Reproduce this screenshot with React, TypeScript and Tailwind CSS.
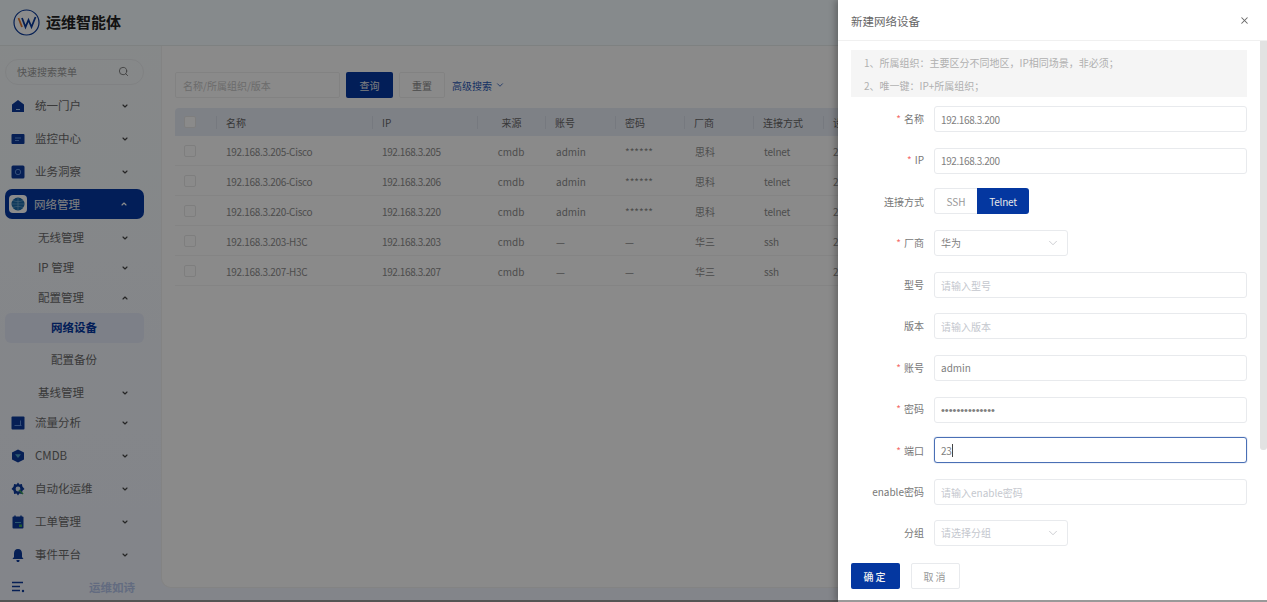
import { ChevronDown, ChevronUp, Search, X } from 'lucide-react';
import type { ReactNode } from 'react';

const FONT = '"Noto Sans CJK SC", "Noto Sans", sans-serif';

const COLS = 'grid-cols-[41px_156px_105px_68px_70px_69px_69px_70px_1fr]';

const devices = [
  { name: '192.168.3.205-Cisco', ip: '192.168.3.205', user: 'admin', pwd: '******', vendor: '思科', conn: 'telnet' },
  { name: '192.168.3.206-Cisco', ip: '192.168.3.206', user: 'admin', pwd: '******', vendor: '思科', conn: 'telnet' },
  { name: '192.168.3.220-Cisco', ip: '192.168.3.220', user: 'admin', pwd: '******', vendor: '思科', conn: 'telnet' },
  { name: '192.168.3.203-H3C', ip: '192.168.3.203', user: '—', pwd: '—', vendor: '华三', conn: 'ssh' },
  { name: '192.168.3.207-H3C', ip: '192.168.3.207', user: '—', pwd: '—', vendor: '华三', conn: 'ssh' },
];

function Glyph({ children }: { children: ReactNode }) {
  return (
    <svg width="14" height="14" viewBox="0 0 14 14" className="shrink-0">
      {children}
    </svg>
  );
}

const icons: Record<string, ReactNode> = {
  home: (
    <Glyph>
      <path d="M7 1 13 5.500V13H1V5.500Z" fill="#0b3a9c" />
      <path d="M5 10.500h4" stroke="#9fc3ee" strokeWidth="1" />
    </Glyph>
  ),
  monitor: (
    <Glyph>
      <rect x="0.500" y="2" width="13" height="10" rx="1" fill="#0b3a9c" />
      <path d="M4 6h6M4 8.500h4" stroke="#5f8fdc" strokeWidth="1" />
    </Glyph>
  ),
  insight: (
    <Glyph>
      <rect x="0.500" y="0.500" width="13" height="13" rx="1.500" fill="#0b3a9c" />
      <circle cx="7" cy="7" r="2.700" fill="none" stroke="#5f8fdc" strokeWidth="1" />
    </Glyph>
  ),
  flow: (
    <Glyph>
      <rect x="0.500" y="0.500" width="13" height="13" rx="1" fill="#0b3a9c" />
      <path d="M3.500 9.500h7M9.500 4.500v5" stroke="#5f8fdc" strokeWidth="1" />
    </Glyph>
  ),
  cmdb: (
    <Glyph>
      <path d="M7 .5 13 3.500v7L7 13.500 1 10.500v-7Z" fill="#0b3a9c" />
      <path d="M4 5.200h6L7 9Z" fill="#4fa0c8" />
    </Glyph>
  ),
  auto: (
    <Glyph>
      <path d="M7 .5 8.400 2.600 10.900 2l.5 2.500L13.500 7l-2.100 1.800-.5 3.200-2.500-.6L7 13.500 5.600 11.400 3.100 12l-.5-3.200L.5 7l2.100-2.500.5-2.500 2.500.6Z" fill="#0b3a9c" />
      <circle cx="7" cy="7" r="2.400" fill="#dfe8f2" />
      <path d="M8 8 12 12" stroke="#3fa35a" strokeWidth="1.600" />
    </Glyph>
  ),
  order: (
    <Glyph>
      <rect x="1.500" y="1.500" width="11" height="12" rx="1" fill="#0b3a9c" />
      <path d="M4 .5v2.500M10 .5v2.500" stroke="#0b3a9c" strokeWidth="1.400" />
      <path d="M4 7.500h6" stroke="#4fa0c8" strokeWidth="1" />
      <rect x="8" y="9.500" width="3" height="2.500" fill="#3fa35a" />
    </Glyph>
  ),
  bell: (
    <Glyph>
      <path d="M7 1c2.700 0 4 2 4 4.500V9l1.500 2h-11L3 9V5.500C3 3 4.300 1 7 1Z" fill="#0b3a9c" />
      <path d="M5.500 12h3v.6a1.500 1.500 0 0 1-3 0Z" fill="#0b3a9c" />
    </Glyph>
  ),
};

function NavItem({ icon, label }: { icon: string; label: string }) {
  return (
    <div className="flex h-[33px] items-center pl-[11px] pr-[21px]">
      <span className="flex w-[18px] justify-start">{icons[icon]}</span>
      <span className="ml-[6px] flex-1 text-[11.5px] text-[#6a6a6a]">{label}</span>
      <ChevronDown size={8} strokeWidth={3.500} className="text-[#444]" />
    </div>
  );
}

function SubItem({ label, open, h }: { label: string; open?: boolean; h: string }) {
  return (
    <div className={`flex items-center pl-[38px] pr-[21px] ${h}`}>
      <span className="flex-1 text-[11.5px] text-[#6a6a6a]">{label}</span>
      {open ? (
        <ChevronUp size={8} strokeWidth={3.500} className="text-[#444]" />
      ) : (
        <ChevronDown size={8} strokeWidth={3.500} className="text-[#444]" />
      )}
    </div>
  );
}

function Sidebar() {
  return (
    <aside className="flex w-[150px] shrink-0 flex-col pt-[13px]">
      <div className="ml-[5px] mr-[6px] flex h-[26px] items-center rounded-full border border-[#eaecee] pl-[11px] pr-[14px]">
        <span className="flex-1 text-[10px] text-[#999]">快速搜索菜单</span>
        <Search size={11} className="text-[#777]" />
      </div>
      <div className="mt-[5px]">
        <NavItem icon="home" label="统一门户" />
        <NavItem icon="monitor" label="监控中心" />
        <NavItem icon="insight" label="业务洞察" />
        <div className="ml-[5px] mr-[6px] flex h-[30px] items-center rounded-[7px] bg-[#0437a0] pl-[4px] pr-[16px]">
          <span className="flex h-[18px] w-[18px] items-center justify-center rounded-[4px] bg-white">
            <svg width="14" height="14" viewBox="0 0 14 14">
              <circle cx="7" cy="7" r="6.500" fill="#1c6aa8" />
              <path d="M7 .5v13M.5 7h13M2 3.500c3 1.500 7 1.500 10 0M2 10.500c3-1.500 7-1.500 10 0" stroke="#7fb2d6" strokeWidth=".6" fill="none" />
            </svg>
          </span>
          <span className="ml-[7px] flex-1 pt-[2px] text-[11.5px] text-[#e8e8e8]">网络管理</span>
          <ChevronUp size={8} strokeWidth={3.500} className="text-white" />
        </div>
        <SubItem label="无线管理" h="mt-[3px] h-[33px]" />
        <SubItem label="IP 管理" h="h-[30px] -mt-[2px]" />
        <SubItem label="配置管理" open h="h-[30px]" />
        <div className="ml-[5px] mr-[6px] flex h-[30px] items-center rounded-[6px] bg-[#e4e9f7] pl-[46px] text-[11.5px] font-bold text-[#0437a0]">
          网络设备
        </div>
        <div className="mt-[1px] flex h-[33px] items-center pl-[51px] text-[11.5px] text-[#6a6a6a]">配置备份</div>
        <SubItem label="基线管理" h="h-[33px]" />
        <div className="-mt-[3px]">
          <NavItem icon="flow" label="流量分析" />
          <NavItem icon="cmdb" label="CMDB" />
          <NavItem icon="auto" label="自动化运维" />
          <NavItem icon="order" label="工单管理" />
          <NavItem icon="bell" label="事件平台" />
        </div>
      </div>
      <div className="mt-[3px] flex h-[26px] items-center pl-[12px]">
        <svg width="13" height="12" viewBox="0 0 13 12">
          <path d="M0 1.500h11M0 5.500h8M0 9.500h8" stroke="#0b3a9c" strokeWidth="1.300" />
          <circle cx="11" cy="10" r="1.200" fill="#0b3a9c" />
        </svg>
        <span className="ml-[64px] text-[11.5px] font-bold text-[#b4c4ea]">运维如诗</span>
      </div>
    </aside>
  );
}

function Checkbox() {
  return <span className="block h-[12px] w-[12px] rounded-[2px] border border-[#e6e6e6] bg-[#fcfcfc]" />;
}

function DeviceTable() {
  return (
    <div className="min-w-0 flex-1 rounded-bl-[10px] border-b border-l border-[#eeeeee] bg-[#fcfcfc] pl-[13px] pt-[26px]">
      <div className="flex items-center">
        <div className="flex h-[26px] w-[165px] items-center rounded-[2px] border border-[#ededed] pl-[7px] text-[10px] text-[#c4c4c4]">
          名称/所属组织/版本
        </div>
        <button className="ml-[6px] h-[26px] w-[47px] rounded-[2px] bg-[#0437a0] text-[10px] text-[#e8e8e8]">查询</button>
        <button className="ml-[6px] h-[26px] w-[46px] rounded-[2px] border border-[#ededed] text-[10px] text-[#8a8a8a]">重置</button>
        <span className="ml-[7px] flex items-center gap-[3px] text-[10px] text-[#2a58b4]">
          高级搜索
          <ChevronDown size={10} />
        </span>
      </div>
      <div className={`mt-[10px] grid h-[28px] items-center rounded-t-[4px] bg-[#e6ebf5] text-[10px] text-[#666] ${COLS}`}>
        <span className="pl-[9px]"><Checkbox /></span>
        {['名称', 'IP', '来源', '账号', '密码', '厂商', '连接方式', '设备'].map((h, i) => (
          <span
            key={h}
            className={`h-[13px] overflow-hidden whitespace-nowrap border-l border-[#d8dde8] leading-[13px] ${i === 2 ? 'text-center' : 'pl-[9px]'}`}
          >
            {i === 7 ? '设' : h}
          </span>
        ))}
      </div>
      {devices.map((d) => (
        <div key={d.name} className={`grid h-[30px] items-center border-b border-[#f1f1f1] pt-[1px] text-[10px] text-[#8c8c8c] ${COLS}`}>
          <span className="pl-[9px]"><Checkbox /></span>
          <span className="pl-[10px] tracking-[-0.3px]">{d.name}</span>
          <span className="pl-[10px] tracking-[-0.4px]">{d.ip}</span>
          <span className="text-center">cmdb</span>
          <span className="pl-[11px]">{d.user}</span>
          <span className="pl-[10px]">{d.pwd}</span>
          <span className="pl-[11px]">{d.vendor}</span>
          <span className="pl-[11px] tracking-[-0.2px]">{d.conn}</span>
          <span className="pl-[10px]">2</span>
        </div>
      ))}
    </div>
  );
}

function Field({ label, required, children }: { label: string; required?: boolean; children: ReactNode }) {
  return (
    <div className="mb-[15.45px] flex h-[26px] items-center">
      <label className="w-[73px] whitespace-nowrap text-right text-[10px] text-[#777]">
        {required && <span className="mr-[3px] text-[#f56c6c]">*</span>}
        {label}
      </label>
      <div className="ml-[10px] min-w-0 flex-1">{children}</div>
    </div>
  );
}

const inputClass =
  'h-[26px] w-full rounded-[3px] border border-[#e8eaed] bg-white px-[6px] text-[10px] text-[#808080] outline-none placeholder:text-[#c4c7ce]';

function SelectBox({ text, muted }: { text: string; muted?: boolean }) {
  return (
    <div className="flex h-[26px] w-[134px] items-center rounded-[3px] border border-[#e8eaed] pl-[6px] pr-[7px] text-[10px]">
      <span className={`flex-1 ${muted ? 'text-[#c4c7ce]' : 'text-[#808080]'}`}>{text}</span>
      <ChevronDown size={14} strokeWidth={1} className="text-[#a8abb2]" />
    </div>
  );
}

function Drawer() {
  return (
    <div className="absolute inset-y-0 right-0 flex w-[429px] flex-col border-b-2 border-[#999] bg-white shadow-[-3px_0_6px_rgba(0,0,0,0.25)]">
      <div className="flex h-[41px] shrink-0 items-center justify-between border-b border-[#f0f0f0] pl-[13px] pr-[17px] pt-[3px]">
        <span className="text-[11.5px] text-[#666]">新建网络设备</span>
        <X size={11} strokeWidth={2.200} className="-mt-[3px] text-[#666]" />
      </div>
      <div className="relative min-h-0 flex-1 overflow-hidden pl-[13px] pr-[20px] pt-[9px]">
        <div className="h-[47px] bg-[#f5f5f5] pl-[13px] pt-[1px] text-[10px] leading-[23px] text-[#b0b0b0]">
          <div>1、所属组织：主要区分不同地区，IP相同场景，非必须；</div>
          <div>2、唯一键：IP+所属组织；</div>
        </div>
        <div className="mt-[8.5px]">
          <Field label="名称" required>
            <input className={`${inputClass} tracking-[-0.4px]`} defaultValue="192.168.3.200" />
          </Field>
          <Field label="IP" required>
            <input className={`${inputClass} tracking-[-0.4px]`} defaultValue="192.168.3.200" />
          </Field>
          <Field label="连接方式">
            <div className="flex h-[26px] text-[10px]">
              <span className="flex w-[43px] items-center justify-center rounded-l-[3px] border border-r-0 border-[#e8eaed] text-[#999]">SSH</span>
              <span className="flex w-[52px] items-center justify-center rounded-r-[3px] bg-[#0437a0] tracking-[-0.2px] text-[#e8e8e8]">Telnet</span>
            </div>
          </Field>
          <Field label="厂商" required>
            <SelectBox text="华为" />
          </Field>
          <Field label="型号">
            <input className={inputClass} placeholder="请输入型号" />
          </Field>
          <Field label="版本">
            <input className={inputClass} placeholder="请输入版本" />
          </Field>
          <Field label="账号" required>
            <input className={inputClass} defaultValue="admin" />
          </Field>
          <Field label="密码" required>
            <input
              className={`${inputClass} font-['Liberation_Sans'] text-[11px] text-[#555]`}
              type="password"
              defaultValue="12345678901234"
            />
          </Field>
          <Field label="端口" required>
            <div className="flex h-[26px] items-center rounded-[3px] border border-[#4a6fb5] px-[6px] text-[10px] tracking-[-0.4px] text-[#808080] shadow-[0_0_1px_#4a6fb5]">
              23
              <span className="ml-[1px] h-[13px] w-px bg-[#444]" />
            </div>
          </Field>
          <Field label="enable密码">
            <input className={inputClass} placeholder="请输入enable密码" />
          </Field>
          <Field label="分组">
            <SelectBox text="请选择分组" muted />
          </Field>
        </div>
        <div className="absolute right-0 top-0 h-[409px] w-[7px] rounded-b-[3px] bg-[#e2e2e2]" />
      </div>
      <div className="flex h-[48px] shrink-0 gap-[11px] pl-[13px] pt-[11px] text-[10px]">
        <button className="h-[26px] w-[49px] rounded-[2px] bg-[#0437a0] font-medium tracking-[2px] text-[#f0f0f0]">确定</button>
        <button className="h-[26px] w-[49px] rounded-[2px] border border-[#e8eaed] tracking-[2px] text-[#999]">取消</button>
      </div>
    </div>
  );
}

export default function App() {
  return (
    <div className="relative flex h-[602px] w-[1267px] flex-col overflow-hidden bg-gradient-to-b from-[#f5f9fa] to-[#eef2fb]" style={{ fontFamily: FONT }}>
      <header className="flex h-[46px] shrink-0 items-center border-b border-[#e6ebec] bg-[#f5fcff] pl-[13px]">
        <svg width="27" height="27" viewBox="0 0 27 27">
          <circle cx="13.500" cy="13.500" r="12.500" fill="#fff" stroke="#0a3a9a" strokeWidth="1.200" />
          <path d="M5.500 9 9 18" stroke="#e2782c" strokeWidth="1.800" fill="none" />
          <path d="M9 9l3.500 9 3-7 3 7 4-10" stroke="#0a3a9a" strokeWidth="1.800" fill="none" />
        </svg>
        <span className="ml-[6px] text-[15px] font-bold text-[#222]">运维智能体</span>
      </header>
      <div className="flex min-h-0 flex-1">
        <Sidebar />
        <div className="flex min-w-0 flex-1 pb-[12px] pl-[11px]">
          <DeviceTable />
        </div>
      </div>
      <div className="h-[2px] shrink-0 bg-[#9a9a9a]" />
      <div className="absolute inset-0 bg-black/45" />
      <Drawer />
    </div>
  );
}
